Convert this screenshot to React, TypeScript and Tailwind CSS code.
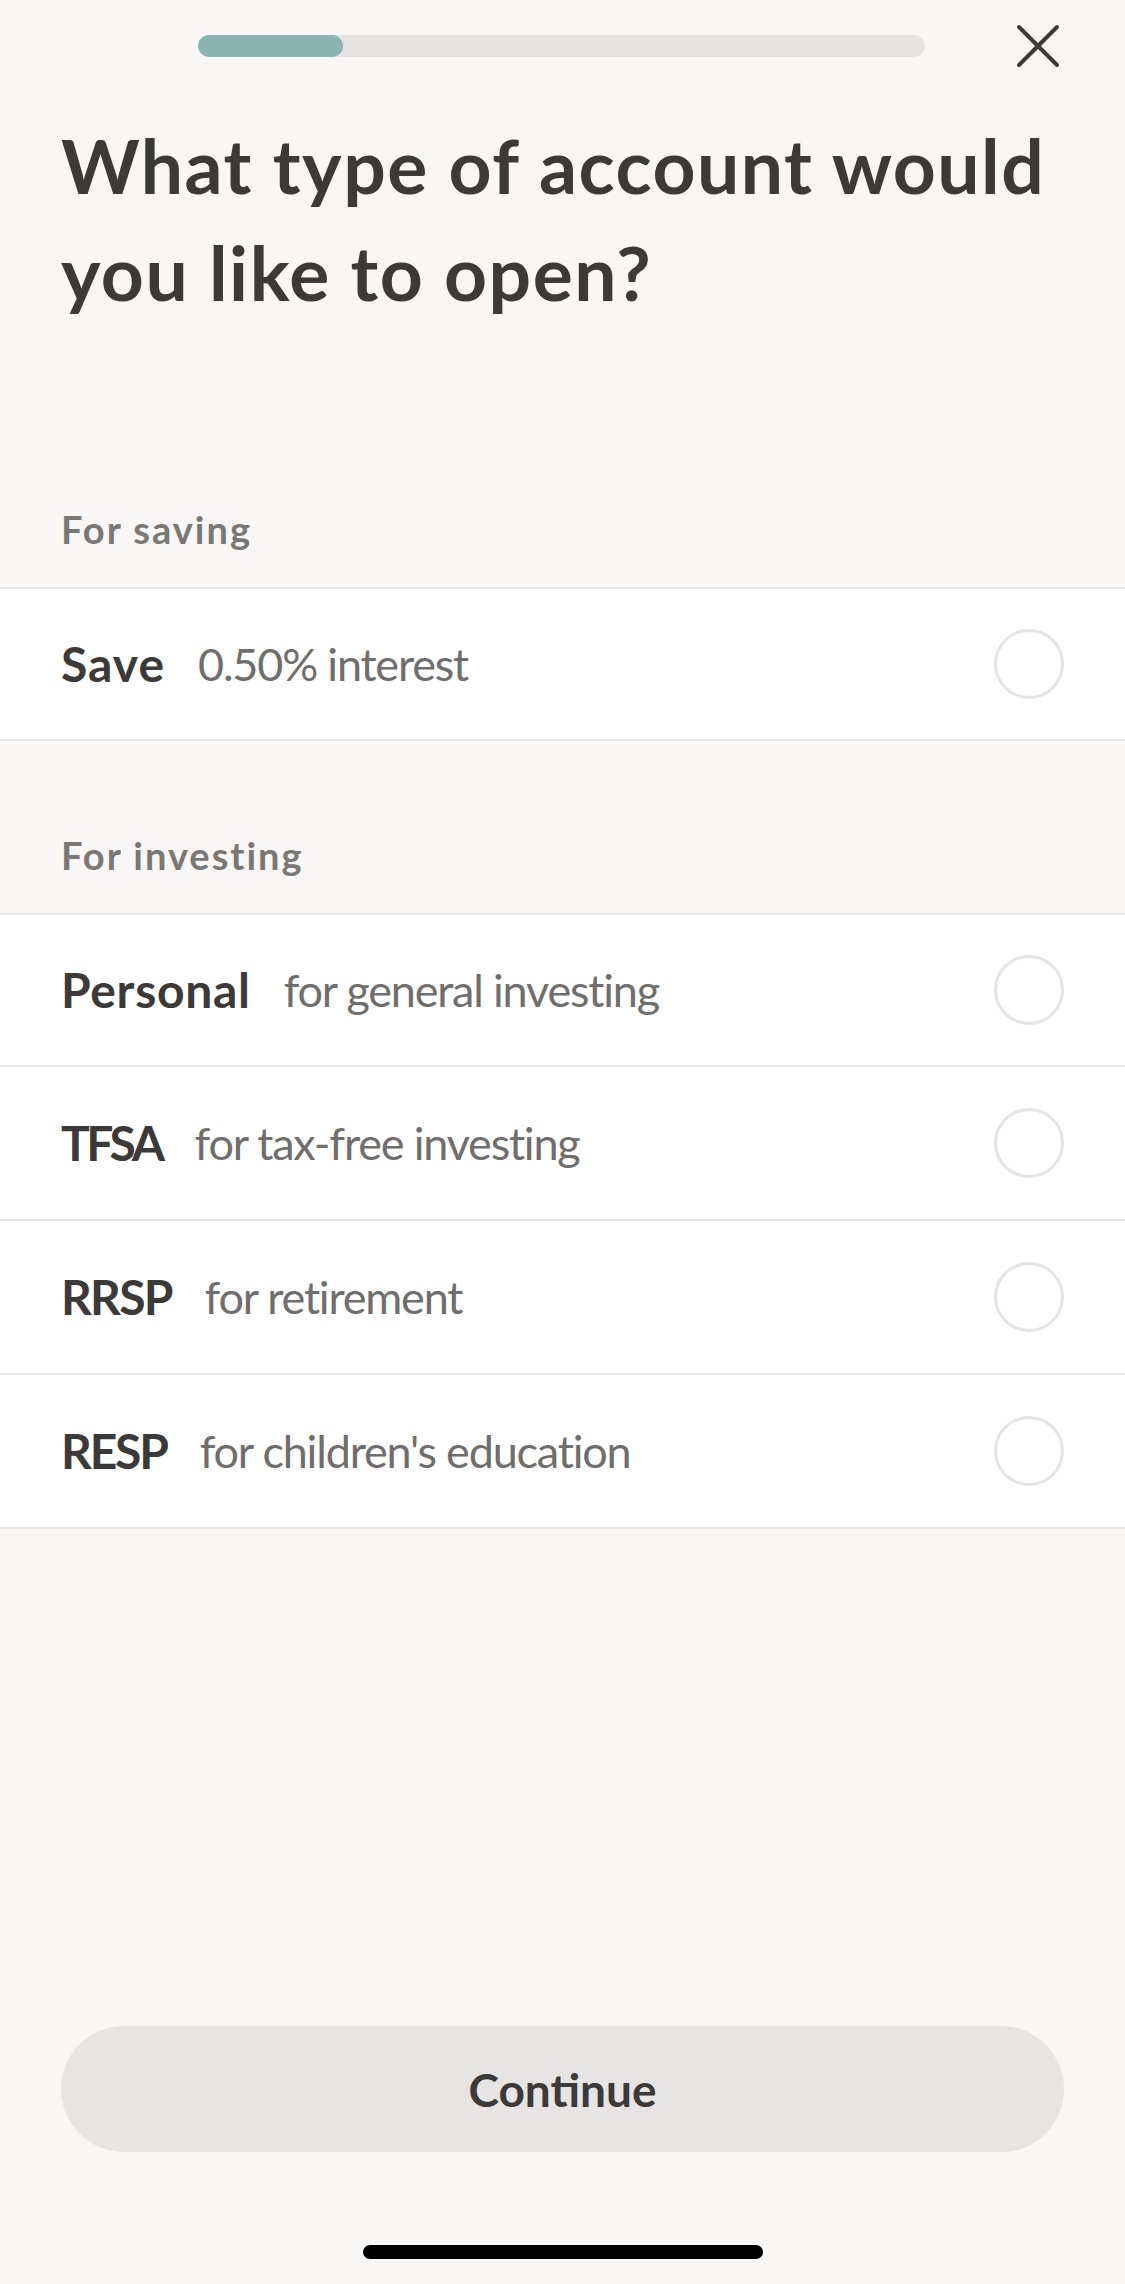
import React from "react";

const font = { fontFamily: "Lato, 'Noto Sans', sans-serif" };

function Row({ title, desc, first, track }: { title: string; desc: string; first?: boolean; track: string }) {
  return (
    <div
      className={`flex h-[154px] items-center bg-white border-b-2 border-[#e7e6e4] pl-[61px] pr-[61px] ${first ? "border-t-2" : ""}`}
    >
      <span className={`text-[48px] font-bold text-[#3b3a38] leading-none ${track}`}>{title}</span>
      <span className="ml-[33px] text-[45px] tracking-[-1.2px] font-normal text-[#6f6e6c] leading-none">{desc}</span>
      <span className="ml-auto h-[70px] w-[70px] rounded-full border-[3px] border-[#e4e4e3]" />
    </div>
  );
}

function SectionLabel({ children }: { children: React.ReactNode }) {
  return (
    <div className="pl-[61px] pb-[34px] text-[38px] tracking-[2px] leading-[48px] font-bold text-[#797876]">{children}</div>
  );
}

export default function App() {
  return (
    <div className="flex h-[2284px] w-[1125px] flex-col bg-[#f8f7f5]" style={font}>
      <div className="flex h-[92px] items-center">
        <div className="ml-[198px] h-[22px] w-[727px] rounded-full bg-[#e5e4e2] overflow-hidden">
          <div className="h-full w-[145px] rounded-full bg-[#8ab5b2]" />
        </div>
        <svg className="ml-auto mr-[64px]" width="46" height="46" viewBox="0 0 46 46" fill="none">
          <path d="M4 4 L42 42 M42 4 L4 42" stroke="#3b3a38" strokeWidth="4" strokeLinecap="round" />
        </svg>
      </div>
      <h1 className="mt-[20px] pl-[61px] pr-[30px] text-[75px] tracking-[1.5px] leading-[107px] font-bold text-[#3b3a38]">
        What type of account would you like to open?
      </h1>
      <div className="mt-[179px]">
        <SectionLabel>For saving</SectionLabel>
        <Row first title="Save" desc="0.50% interest" track="tracking-[1px]" />
      </div>
      <div className="pt-[90px]">
        <SectionLabel>For investing</SectionLabel>
        <Row first title="Personal" desc="for general investing" track="tracking-[0.7px]" />
        <Row title="TFSA" desc="for tax-free investing" track="tracking-[-3.5px]" />
        <Row title="RRSP" desc="for retirement" track="tracking-[-1.8px]" />
        <Row title="RESP" desc="for children's education" track="tracking-[-2.2px]" />
      </div>
      <div className="flex-1" />
      <div className="px-[61px]">
        <button className="flex h-[126px] w-full items-center justify-center rounded-full bg-[#e6e5e3] text-[46px] font-bold text-[#3b3a38]">
          Continue
        </button>
      </div>
      <div className="mt-[93px] mb-[25px] flex justify-center">
        <div className="h-[14px] w-[400px] rounded-full bg-black" />
      </div>
    </div>
  );
}
